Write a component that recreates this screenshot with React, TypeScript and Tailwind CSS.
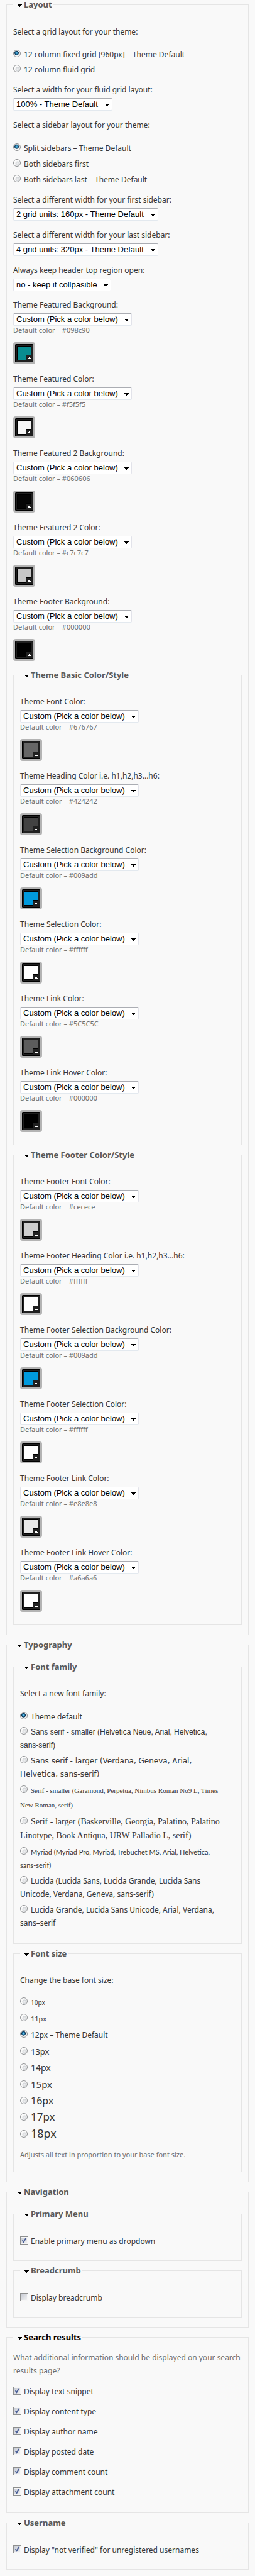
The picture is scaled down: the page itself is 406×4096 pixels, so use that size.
import { useId, type ReactNode } from "react";

const CUSTOM = "Custom (Pick a color below)";

function Triangle({ className }: { className: string }) {
  return (
    <svg className={className} width="7" height="4" viewBox="0 0 7 4" aria-hidden="true">
      <path d="M0 0H7V1H6V2H5V3H4V4H3V3H2V2H1V1H0Z" fill="#000" shapeRendering="crispEdges" />
    </svg>
  );
}

function Group({
  title,
  className,
  active = false,
  children,
}: {
  title: string;
  className: string;
  active?: boolean;
  children: ReactNode;
}) {
  return (
    <fieldset className={`min-w-0 border border-[#e5e5e5] px-[10px] ${className}`}>
      <legend className="pr-[2px] pl-[7px] text-[13px] leading-[15px] font-bold">
        <a
          href="#"
          className={`flex items-center gap-[3px] ${active ? "text-black underline" : "text-[#5a5a5a]"}`}
        >
          <Triangle className="mt-[3px] shrink-0" />
          {title}
        </a>
      </legend>
      {children}
    </fieldset>
  );
}

function SelectField({ label, value, className }: { label: string; value: string; className: string }) {
  const id = useId();
  return (
    <div className={className}>
      <label htmlFor={id} className="block leading-5">
        {label}
      </label>
      <div className="relative mt-[3px] flex w-fit">
        <select
          id={id}
          defaultValue={value}
          className="h-5 appearance-none rounded-[2px] border border-x-[#e2e3ea] border-t-[#abadb3] border-b-[#e3e9ef] bg-white pr-[21px] pl-[4px] font-['Liberation_Sans',Arial,sans-serif] text-[13px] leading-[18px] text-black"
        >
          <option>{value}</option>
        </select>
        <Triangle className="pointer-events-none absolute top-[9px] right-[5px]" />
      </div>
    </div>
  );
}

function ColorField({ label, preset, color }: { label: string; preset: string; color: string }) {
  return (
    <div>
      <SelectField label={label} value={CUSTOM} className="" />
      <p className="text-[11px] leading-[14px] text-[#6e6e6e]">Default color – {preset}</p>
      <button type="button" aria-label={`${label} ${color}`} className="mt-3 block">
        <svg width="35" height="35" viewBox="0 0 35 35" className="block" aria-hidden="true">
          <rect width="35" height="35" rx="4" fill="#b4b4b4" />
          <rect x="3" y="3" width="29" height="29" rx="1.5" fill="#000" />
          <rect x="4" y="4" width="27" height="27" rx="1" fill="#202020" />
          <path d="M6 6H29V29H6Z" fill="#000" />
          <path d="M7 7H28V28H7Z" fill={color} />
          <path d="M20 20H29V29H20Z" fill="#000" />
          <path d="M21 21H31V31H21Z" fill="#202020" />
          <path d="M25 24H26V25H27V26H28V27H23V26H24V25H25Z" fill="#fff" />
        </svg>
      </button>
    </div>
  );
}

function Radio({
  name,
  label,
  checked = false,
  className,
}: {
  name: string;
  label: string;
  checked?: boolean;
  className: string;
}) {
  return (
    <label className={`block whitespace-pre-line ${className}`}>
      <input
        type="radio"
        name={name}
        defaultChecked={checked}
        className="mr-[5px] inline-block size-3 appearance-none rounded-full border border-[#8f9193] bg-[radial-gradient(circle_at_60%_60%,#f4f4f5_0,#d3d6d9_3px,#fafafa_4px)] align-[0px] checked:bg-[radial-gradient(circle_at_45%_42%,#7fd0f0_0,#1b78ac_2px,#0b2f4c_3px,#f4f4f4_4px)]"
      />
      {label}
    </label>
  );
}

function Check({ label, checked = false, className }: { label: string; checked?: boolean; className: string }) {
  return (
    <label className={`flex items-center gap-[4px] leading-[21px] ${className}`}>
      <span className="relative mb-[3px] block size-[13px] shrink-0">
        <input
          type="checkbox"
          defaultChecked={checked}
          className="peer block size-[13px] appearance-none border border-[#8e8f8f] bg-[linear-gradient(135deg,#c5c9d2,#f4f4f4)] shadow-[inset_0_0_0_1px_#f6f6f6]"
        />
        <svg
          className="pointer-events-none absolute inset-0 hidden peer-checked:block"
          width="13"
          height="13"
          viewBox="0 0 13 13"
          aria-hidden="true"
        >
          <path d="M3.6 6.2 5.6 9 9.2 3" fill="none" stroke="#4a5f97" strokeWidth="2" />
        </svg>
      </span>
      {label}
    </label>
  );
}

const layoutColors = [
  ["Theme Featured Background:", "#098c90", "#098c90"],
  ["Theme Featured Color:", "#f5f5f5", "#f5f5f5"],
  ["Theme Featured 2 Background:", "#060606", "#060606"],
  ["Theme Featured 2 Color:", "#c7c7c7", "#c7c7c7"],
  ["Theme Footer Background:", "#000000", "#000000"],
];

const basicColors = [
  ["Theme Font Color:", "#676767", "#676767"],
  ["Theme Heading Color i.e. h1,h2,h3...h6:", "#424242", "#424242"],
  ["Theme Selection Background Color:", "#009add", "#009add"],
  ["Theme Selection Color:", "#ffffff", "#ffffff"],
  ["Theme Link Color:", "#5C5C5C", "#5c5c5c"],
  ["Theme Link Hover Color:", "#000000", "#000000"],
];

const footerColors = [
  ["Theme Footer Font Color:", "#cecece", "#cecece"],
  ["Theme Footer Heading Color i.e. h1,h2,h3...h6:", "#ffffff", "#ffffff"],
  ["Theme Footer Selection Background Color:", "#009add", "#009add"],
  ["Theme Footer Selection Color:", "#ffffff", "#ffffff"],
  ["Theme Footer Link Color:", "#e8e8e8", "#e8e8e8"],
  ["Theme Footer Link Hover Color:", "#a6a6a6", "#ffffff"],
];

const families = [
  ["Theme default", "leading-[21px]"],
  [
    "Sans serif - smaller (Helvetica Neue, Arial, Helvetica,\nsans-serif)",
    "font-['Liberation_Sans',Arial,sans-serif] text-[12px] leading-[21px]",
  ],
  [
    "Sans serif - larger (Verdana, Geneva, Arial,\nHelvetica, sans-serif)",
    "font-['DejaVu_Sans',Verdana,sans-serif] text-[12px] leading-[21px]",
  ],
  [
    "Serif - smaller (Garamond, Perpetua, Nimbus Roman No9 L, Times\nNew Roman, serif)",
    "font-['Liberation_Serif',serif] text-[11px] leading-[23px]",
  ],
  [
    "Serif - larger (Baskerville, Georgia, Palatino, Palatino\nLinotype, Book Antiqua, URW Palladio L, serif)",
    "font-['Liberation_Serif',serif] text-[14px] leading-[22px]",
  ],
  [
    "Myriad (Myriad Pro, Myriad, Trebuchet MS, Arial, Helvetica,\nsans-serif)",
    "font-['Lato',sans-serif] text-[11px] leading-[21px]",
  ],
  ["Lucida (Lucida Sans, Lucida Grande, Lucida Sans\nUnicode, Verdana, Geneva, sans-serif)", "leading-[21px]"],
  ["Lucida Grande, Lucida Sans Unicode, Arial, Verdana,\nsans–serif", "leading-[21px]"],
];

const sizes = [
  ["10px", "text-[10px]"],
  ["11px", "text-[11px]"],
  ["12px – Theme Default", "text-[12px]"],
  ["13px", "text-[13px]"],
  ["14px", "text-[14px]"],
  ["15px", "text-[15px]"],
  ["16px", "text-[16px]"],
  ["17px", "text-[17px]"],
  ["18px", "text-[18px]"],
];

const searchOptions = [
  "Display text snippet",
  "Display content type",
  "Display author name",
  "Display posted date",
  "Display comment count",
  "Display attachment count",
];

function ColorList({ items }: { items: string[][] }) {
  return (
    <div className="flex flex-col gap-[14px]">
      {items.map(([label, preset, color]) => (
        <ColorField key={label} label={label} preset={preset} color={color} />
      ))}
    </div>
  );
}

export default function App() {
  return (
    <form className="flex flex-col gap-2 bg-[#f9f9f9] px-[10px] pb-[10px] font-['Noto_Sans',sans-serif] text-[12px] text-[#363636]">
      <Group title="Layout" className="pb-[15px]">
        <p className="pt-[26px] leading-5">Select a grid layout for your theme:</p>
        <div className="mt-[14px]">
          <Radio name="grid" label="12 column fixed grid [960px] – Theme Default" checked className="leading-6" />
          <Radio name="grid" label="12 column fluid grid" className="leading-6" />
        </div>
        <SelectField label="Select a width for your fluid grid layout:" value="100% - Theme Default" className="mt-[10px]" />
        <p className="mt-[13px] leading-5">Select a sidebar layout for your theme:</p>
        <div className="mt-[14px]">
          <Radio name="sidebars" label="Split sidebars – Theme Default" checked className="leading-[25px]" />
          <Radio name="sidebars" label="Both sidebars first" className="leading-[25px]" />
          <Radio name="sidebars" label="Both sidebars last – Theme Default" className="leading-[25px]" />
        </div>
        <div className="mt-[10px] mb-[12px] flex flex-col gap-[13px]">
          <SelectField
            label="Select a different width for your first sidebar:"
            value="2 grid units: 160px - Theme Default"
            className=""
          />
          <SelectField
            label="Select a different width for your last sidebar:"
            value="4 grid units: 320px - Theme Default"
            className=""
          />
          <SelectField label="Always keep header top region open:" value="no - keep it collpasible" className="" />
        </div>
        <ColorList items={layoutColors} />
        <Group title="Theme Basic Color/Style" className="mt-[15px] pb-5">
          <div className="pt-[25px]">
            <ColorList items={basicColors} />
          </div>
        </Group>
        <Group title="Theme Footer Color/Style" className="mt-2 pb-5">
          <div className="pt-[25px]">
            <ColorList items={footerColors} />
          </div>
        </Group>
      </Group>

      <Group title="Typography" className="pb-[15px]">
        <Group title="Font family" className="mt-5 pb-5">
          <p className="pt-[25px] leading-5">Select a new font family:</p>
          <div className="mt-[14px]">
            {families.map(([label, style], i) => (
              <Radio key={label} name="family" label={label} checked={i === 0} className={`py-[2px] ${style}`} />
            ))}
          </div>
        </Group>
        <Group title="Font size" className="mt-2 pb-5">
          <p className="pt-[25px] leading-5">Change the base font size:</p>
          <div className="mt-3">
            {sizes.map(([label, style], i) => (
              <Radio key={label} name="size" label={label} checked={i === 2} className={`${style} leading-[26px]`} />
            ))}
          </div>
          <p className="mt-[14px] text-[11px] leading-[14px] text-[#6e6e6e]">
            Adjusts all text in proportion to your base font size.
          </p>
        </Group>
      </Group>

      <Group title="Navigation" className="pb-[15px]">
        <Group title="Primary Menu" className="mt-5 pb-5">
          <Check label="Enable primary menu as dropdown" checked className="mt-[25px]" />
        </Group>
        <Group title="Breadcrumb" className="mt-2 pb-5">
          <Check label="Display breadcrumb" className="mt-[25px]" />
        </Group>
      </Group>

      <Group title="Search results" active className="pb-[22px]">
        <p className="pt-[14px] leading-[21px] text-[#6e6e6e]">
          What additional information should be displayed on your search results page?
        </p>
        <div className="mt-3 flex flex-col gap-[11px]">
          {searchOptions.map((label) => (
            <Check key={label} label={label} checked className="" />
          ))}
        </div>
      </Group>

      <Group title="Username" className="pb-5">
        <Check label={'Display "not verified" for unregistered usernames'} checked className="mt-[25px]" />
      </Group>
    </form>
  );
}
